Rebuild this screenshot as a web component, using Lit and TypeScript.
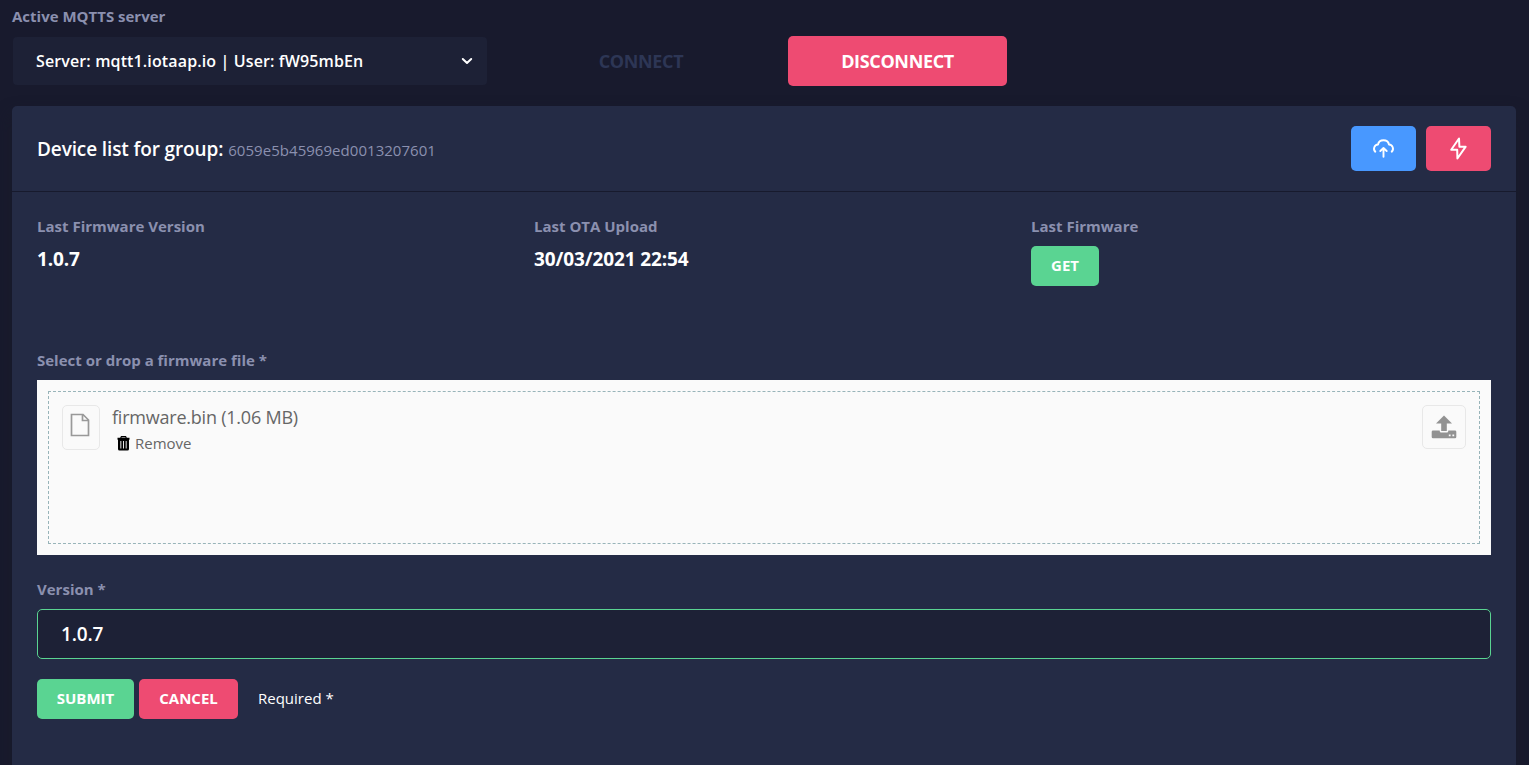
import { LitElement, html, css } from "lit";
import { customElement } from "lit/decorators.js";

@customElement("app-root")
export class AppRoot extends LitElement {
  static styles = css`
    :host {
      display: block;
      height: 100vh;
      overflow: hidden;
      background: #181a2d;
      color: #fff;
      font-family: "Open Sans", sans-serif;
      font-size: 15px;
    }
    * { box-sizing: border-box; }
    .page { padding: 6px 13px 0 12px; }
    .label { color: #8b90af; font-weight: 700; font-size: 15px; line-height: 21px; }
    .server-row {
      display: grid;
      grid-template-columns: 475px 301px 219px;
      align-items: center;
      margin-top: 9px;
      height: 50px;
    }
    .select {
      display: flex;
      align-items: center;
      justify-content: space-between;
      height: 48px;
      margin-left: 1px;
      padding: 0 14px 0 23px;
      border-radius: 4px;
      background: #1d2136;
      font-size: 16px;
      font-weight: 600;
      letter-spacing: 0.13px;
    }
    .btn {
      display: flex;
      align-items: center;
      justify-content: center;
      border-radius: 5px;
      font-weight: 700;
      color: #fff;
      text-transform: uppercase;
    }
    .big { height: 50px; font-size: 18px; letter-spacing: -0.35px; }
    .ghost { color: #2d3655; padding-left: 7px; }
    .red { background: #ee4b72; }
    .green { background: #5ad492; }
    .blue { background: #4898ff; }
    .small { height: 40px; padding-bottom: 2px; font-size: 15px; }
    .icon { width: 65px; height: 45px; }
    .get { width: 68px; margin-top: 9px; }
    .submit { width: 97px; }
    .cancel { width: 99px; }
    .card {
      margin-top: 20px;
      height: 700px;
      background: #242b45;
      border-radius: 5px;
      box-shadow: 0 8px 16px 0 #191b2a;
    }
    .head {
      display: flex;
      justify-content: space-between;
      align-items: center;
      height: 86px;
      padding: 0 25px;
      border-bottom: 1px solid #171a2d;
    }
    .title { font-size: 19px; font-weight: 600; letter-spacing: -0.12px; }
    .gid { margin-left: 1px; font-size: 15px; font-weight: 500; color: #8b90af; letter-spacing: 0.04px; }
    .actions { display: flex; gap: 10px; }
    .body { padding: 24px 25px 0; }
    .info { display: grid; grid-template-columns: repeat(3, 497px); height: 134px; }
    .value { margin-top: 9px; font-size: 19px; font-weight: 700; line-height: 26px; letter-spacing: -0.12px; }
    .drop {
      margin-top: 9px;
      height: 175px;
      padding: 11px;
      background: #fafafa;
      color: #666;
    }
    .zone {
      display: flex;
      align-items: flex-start;
      height: 153px;
      padding: 13px;
      border: 1px dashed #98b4b9;
    }
    .file, .upload {
      display: flex;
      justify-content: center;
      border: 1px solid #e8e8e8;
      border-radius: 5px;
    }
    .file { width: 38px; height: 45px; padding: 7px 2px 0 0; }
    .upload { width: 44px; height: 44px; align-items: center; margin-left: auto; }
    .meta { margin-left: 12px; }
    .name { font-size: 18px; line-height: 25px; letter-spacing: -0.22px; }
    .remove { display: flex; align-items: center; gap: 5px; margin-left: 5px; font-size: 15px; line-height: 27px; }
    .version { margin-top: 24px; }
    .input {
      display: flex;
      align-items: center;
      height: 50px;
      margin-top: 9px;
      padding-left: 23px;
      border: 1px solid #5ad492;
      border-radius: 5px;
      background: #1d2136;
      font-size: 19px;
      font-weight: 600;
      letter-spacing: -0.15px;
    }
    .foot { display: flex; align-items: center; gap: 5px; margin-top: 20px; }
    .req { margin-left: 15px; padding-bottom: 2px; font-size: 15px; }
    svg { display: block; flex: none; }
  `;

  render() {
    return html`
      <div class="page">
        <div class="label">Active MQTTS server</div>
        <div class="server-row">
          <div class="select">
            <span>Server: mqtt1.iotaap.io | User: fW95mbEn</span>
            <svg width="12" height="8" viewBox="0 0 12 8" fill="none" stroke="#fff" stroke-width="2" stroke-linecap="round" stroke-linejoin="round"><path d="M1.8 2 6 6l4.200-4" /></svg>
          </div>
          <div class="btn big ghost">Connect</div>
          <div class="btn big red">Disconnect</div>
        </div>
        <div class="card">
          <div class="head">
            <div><span class="title">Device list for group:</span> <span class="gid">6059e5b45969ed0013207601</span></div>
            <div class="actions">
              <div class="btn icon blue">
                <svg width="25" height="23" viewBox="0 0 25 23" fill="none" stroke="#fff" stroke-width="1.900" stroke-linecap="round" stroke-linejoin="round"><path d="M4.300 14.700A4.200 4.200 0 0 1 7 7.500 5.600 5.200 0 0 1 18 7.500 4.200 4.200 0 0 1 20.700 14.700M12.500 19.700V11.700M9.300 14 12.500 11l3.200 3" /></svg>
              </div>
              <div class="btn icon red">
                <svg width="25" height="25" viewBox="0 0 25 25" fill="none" stroke="#fff" stroke-width="2" stroke-linejoin="round"><path d="M13 2.500 5.200 13.700H11.200L11.400 22.500 19.700 10.700H13.400Z" /></svg>
              </div>
            </div>
          </div>
          <div class="body">
            <div class="info">
              <div><div class="label">Last Firmware Version</div><div class="value">1.0.7</div></div>
              <div><div class="label">Last OTA Upload</div><div class="value">30/03/2021 22:54</div></div>
              <div><div class="label">Last Firmware</div><div class="btn small green get">Get</div></div>
            </div>
            <div class="label">Select or drop a firmware file *</div>
            <div class="drop">
              <div class="zone">
                <div class="file">
                  <svg width="20" height="24" viewBox="0 0 20 24" fill="none" stroke="#999" stroke-width="1.700"><path d="M1.500 1.500H13L18.500 7V22.500H1.500ZM12.500 1.500V7.500H18.500" /></svg>
                </div>
                <div class="meta">
                  <div class="name">firmware.bin (1.06 MB)</div>
                  <div class="remove">
                    <svg width="13" height="15" viewBox="0 0 13 15"><path fill="#000" fill-rule="evenodd" d="M4 0H9L9.800 1.700H12.500V3.700H12V13Q12 14.500 10.500 14.500H2.500Q1 14.500 1 13V3.700H.5V1.700H3.200ZM4.700 1.200 4.400 1.800H8.600L8.300 1.200ZM3.400 5V12.600H4.300V5ZM6.050 5V12.600H6.950V5ZM8.700 5V12.600H9.600V5Z" /></svg>
                    <span>Remove</span>
                  </div>
                </div>
                <div class="upload">
                  <svg width="26" height="24" viewBox="0 0 26 24"><path fill="#929292" fill-rule="evenodd" d="M13 .5 21 8.500H15.800V16H10.200V8.500H5ZM2 15.500H8.700V16Q8.700 17.500 10.200 17.500H15.800Q17.300 17.500 17.300 16V15.500H24Q25.300 15.500 25.300 16.800V22Q25.300 23.300 24 23.300H2Q.7 23.300 .7 22V16.800Q.7 15.500 2 15.500ZM17.800 19.500V21.300H19.600V19.500ZM21.400 19.500V21.300H23.200V19.500Z" /></svg>
                </div>
              </div>
            </div>
            <div class="label version">Version *</div>
            <div class="input">1.0.7</div>
            <div class="foot">
              <div class="btn small green submit">Submit</div>
              <div class="btn small red cancel">Cancel</div>
              <span class="req">Required *</span>
            </div>
          </div>
        </div>
      </div>
    `;
  }
}
